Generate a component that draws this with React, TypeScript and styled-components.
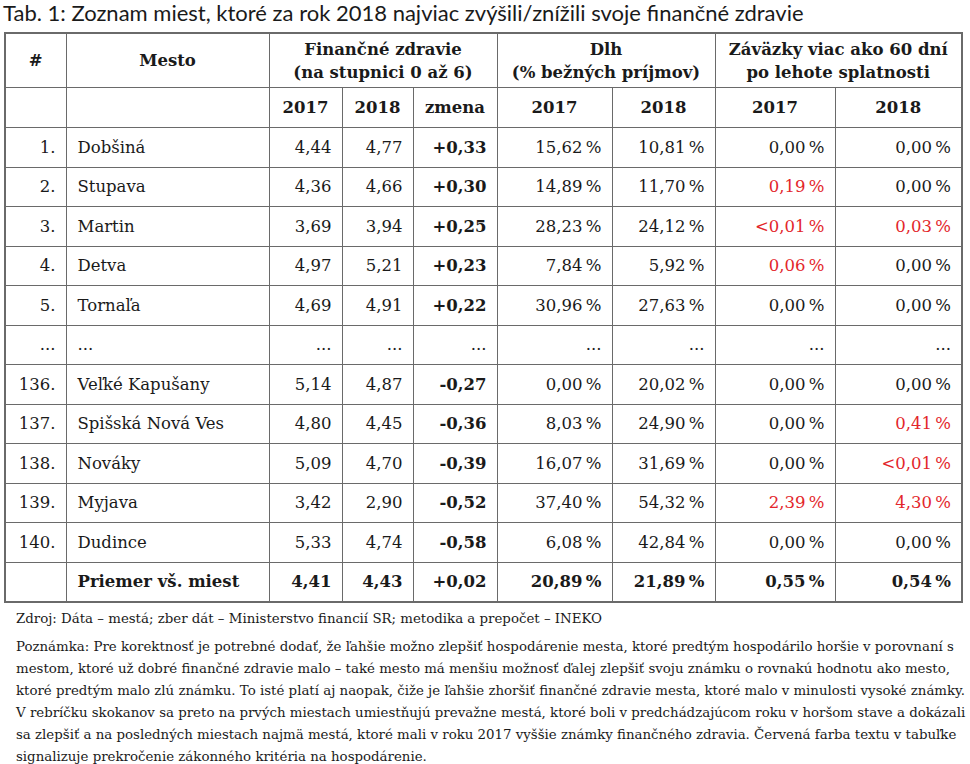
import React from "react";
import styled, { createGlobalStyle } from "styled-components";

const Global = createGlobalStyle`
  html, body { margin: 0; padding: 0; background: #fff; }
  body { font-family: "DejaVu Serif", serif; color: #1a1a1a; }
`;

const Page = styled.div`
  width: 970px;
  padding: 0 0 0 4px;
  box-sizing: border-box;
`;

const Title = styled.div`
  font-family: Lato, "Open Sans", sans-serif;
  font-size: 22px;
  line-height: 25px;
  height: 32px;
  margin-left: -1px;
  color: #1a1a1a;
  white-space: nowrap;
`;

const Table = styled.table`
  border-collapse: collapse;
  table-layout: fixed;
  width: 957px;
  font-family: "DejaVu Serif", serif;
  font-size: 16.5px;
  border: 2px solid #6a6a6a;
`;

const HeadCell = styled.th<{ $h?: number }>`
  border: 1.5px solid #6a6a6a;
  font-weight: bold;
  text-align: center;
  padding: 0;
  line-height: 23px;
  height: ${(p) => p.$h ?? 39}px;
  white-space: nowrap;
`;

const Row = styled.tr`
  height: 39.5px;
`;

const Cell = styled.td<{ $align?: string; $bold?: boolean; $red?: boolean }>`
  border: 1.5px solid #6a6a6a;
  padding: 0 ${(p) => (p.$align === "left" ? "0 0 11px" : "10px 0 0")};
  text-align: ${(p) => p.$align ?? "right"};
  font-weight: ${(p) => (p.$bold ? "bold" : "normal")};
  color: ${(p) => (p.$red ? "#e3262b" : "#1a1a1a")};
  white-space: nowrap;
`;

const Notes = styled.div`
  font-family: "DejaVu Serif", serif;
  font-size: 13.35px;
  color: #1a1a1a;
  padding: 5px 0 0 12px;
  white-space: nowrap;
`;

const Source = styled.div`
  line-height: 22px;
  margin-bottom: 6px;
`;

const Line = styled.div`
  line-height: 22px;
`;

type R = {
  n: string;
  city: string;
  a: string;
  b: string;
  c: string;
  d1: string;
  d2: string;
  z1: string;
  z2: string;
  r1?: boolean;
  r2?: boolean;
  bold?: boolean;
  plain?: boolean;
};

const P = "\u2009%";

const rows: R[] = [
  { n: "1.", city: "Dobšiná", a: "4,44", b: "4,77", c: "+0,33", d1: "15,62" + P, d2: "10,81" + P, z1: "0,00" + P, z2: "0,00" + P },
  { n: "2.", city: "Stupava", a: "4,36", b: "4,66", c: "+0,30", d1: "14,89" + P, d2: "11,70" + P, z1: "0,19" + P, z2: "0,00" + P, r1: true },
  { n: "3.", city: "Martin", a: "3,69", b: "3,94", c: "+0,25", d1: "28,23" + P, d2: "24,12" + P, z1: "<0,01" + P, z2: "0,03" + P, r1: true, r2: true },
  { n: "4.", city: "Detva", a: "4,97", b: "5,21", c: "+0,23", d1: "7,84" + P, d2: "5,92" + P, z1: "0,06" + P, z2: "0,00" + P, r1: true },
  { n: "5.", city: "Tornaľa", a: "4,69", b: "4,91", c: "+0,22", d1: "30,96" + P, d2: "27,63" + P, z1: "0,00" + P, z2: "0,00" + P },
  { n: "...", city: "...", a: "...", b: "...", c: "...", d1: "...", d2: "...", z1: "...", z2: "...", plain: true },
  { n: "136.", city: "Veľké Kapušany", a: "5,14", b: "4,87", c: "-0,27", d1: "0,00" + P, d2: "20,02" + P, z1: "0,00" + P, z2: "0,00" + P },
  { n: "137.", city: "Spišská Nová Ves", a: "4,80", b: "4,45", c: "-0,36", d1: "8,03" + P, d2: "24,90" + P, z1: "0,00" + P, z2: "0,41" + P, r2: true },
  { n: "138.", city: "Nováky", a: "5,09", b: "4,70", c: "-0,39", d1: "16,07" + P, d2: "31,69" + P, z1: "0,00" + P, z2: "<0,01" + P, r2: true },
  { n: "139.", city: "Myjava", a: "3,42", b: "2,90", c: "-0,52", d1: "37,40" + P, d2: "54,32" + P, z1: "2,39" + P, z2: "4,30" + P, r1: true, r2: true },
  { n: "140.", city: "Dudince", a: "5,33", b: "4,74", c: "-0,58", d1: "6,08" + P, d2: "42,84" + P, z1: "0,00" + P, z2: "0,00" + P },
  { n: "", city: "Priemer vš. miest", a: "4,41", b: "4,43", c: "+0,02", d1: "20,89" + P, d2: "21,89" + P, z1: "0,55" + P, z2: "0,54" + P, bold: true },
];

const widths = [61, 203, 73, 71, 84, 115, 103, 120, 127];

const noteLines = [
  "Poznámka: Pre korektnosť je potrebné dodať, že ľahšie možno zlepšiť hospodárenie mesta, ktoré predtým hospodárilo horšie v porovnaní s",
  "mestom, ktoré už dobré finančné zdravie malo – také mesto má menšiu možnosť ďalej zlepšiť svoju známku o rovnakú hodnotu ako mesto,",
  "ktoré predtým malo zlú známku. To isté platí aj naopak, čiže je ľahšie zhoršiť finančné zdravie mesta, ktoré malo v minulosti vysoké známky.",
  "V rebríčku skokanov sa preto na prvých miestach umiestňujú prevažne mestá, ktoré boli v predchádzajúcom roku v horšom stave a dokázali",
  "sa zlepšiť a na posledných miestach najmä mestá, ktoré mali v roku 2017 vyššie známky finančného zdravia. Červená farba textu v tabuľke",
  "signalizuje prekročenie zákonného kritéria na hospodárenie.",
];

export default function App() {
  return (
    <Page>
      <Global />
      <Title>Tab. 1: Zoznam miest, ktoré za rok 2018 najviac zvýšili/znížili svoje finančné zdravie</Title>
      <Table>
        <colgroup>
          {widths.map((w, i) => (
            <col key={i} style={{ width: w }} />
          ))}
        </colgroup>
        <thead>
          <tr>
            <HeadCell $h={53}>#</HeadCell>
            <HeadCell $h={53}>Mesto</HeadCell>
            <HeadCell $h={53} colSpan={3}>
              Finančné zdravie
              <br />
              (na stupnici 0 až 6)
            </HeadCell>
            <HeadCell $h={53} colSpan={2}>
              Dlh
              <br />
              (% bežných príjmov)
            </HeadCell>
            <HeadCell $h={53} colSpan={2}>
              Záväzky viac ako 60 dní
              <br />
              po lehote splatnosti
            </HeadCell>
          </tr>
          <tr>
            <HeadCell />
            <HeadCell />
            <HeadCell>2017</HeadCell>
            <HeadCell>2018</HeadCell>
            <HeadCell>zmena</HeadCell>
            <HeadCell>2017</HeadCell>
            <HeadCell>2018</HeadCell>
            <HeadCell>2017</HeadCell>
            <HeadCell>2018</HeadCell>
          </tr>
        </thead>
        <tbody>
          {rows.map((r, i) => (
            <Row key={i}>
              <Cell $bold={r.bold}>{r.n}</Cell>
              <Cell $align="left" $bold={r.bold}>{r.city}</Cell>
              <Cell $bold={r.bold}>{r.a}</Cell>
              <Cell $bold={r.bold}>{r.b}</Cell>
              <Cell $bold={!r.plain}>{r.c}</Cell>
              <Cell $bold={r.bold}>{r.d1}</Cell>
              <Cell $bold={r.bold}>{r.d2}</Cell>
              <Cell $bold={r.bold} $red={r.r1}>{r.z1}</Cell>
              <Cell $bold={r.bold} $red={r.r2}>{r.z2}</Cell>
            </Row>
          ))}
        </tbody>
      </Table>
      <Notes>
        <Source>Zdroj: Dáta – mestá; zber dát – Ministerstvo financií SR; metodika a prepočet – INEKO</Source>
        {noteLines.map((l, i) => (
          <Line key={i}>{l}</Line>
        ))}
      </Notes>
    </Page>
  );
}
